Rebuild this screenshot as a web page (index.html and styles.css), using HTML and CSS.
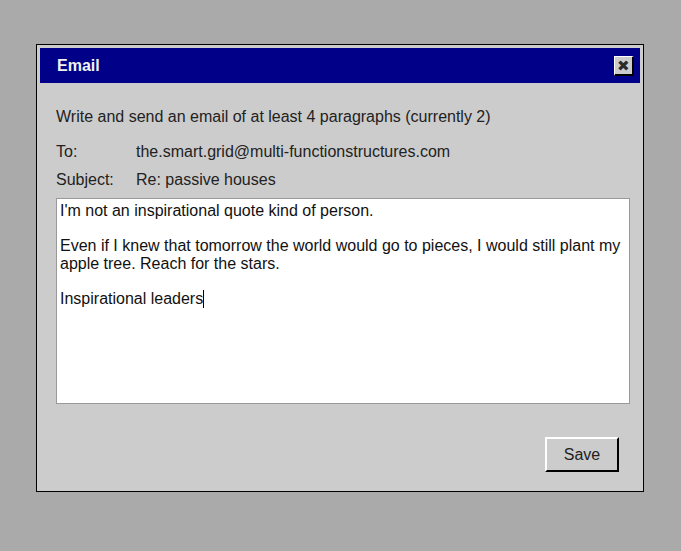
FILE: index.html
```html
<!DOCTYPE html>
<html>
<head>
<meta charset="utf-8">
<link rel="stylesheet" href="styles.css">
</head>
<body>
<div class="dialog">
  <div class="titlebar">
    <span class="title">Email</span>
    <span class="close">✖</span>
  </div>
  <div class="content">
    <p class="intro">Write and send an email of at least 4 paragraphs (currently 2)</p>
    <div class="field"><span class="label">To:</span><span class="value">the.smart.grid@multi-functionstructures.com</span></div>
    <div class="field subject"><span class="label">Subject:</span><span class="value">Re: passive houses</span></div>
    <div class="editor">I'm not an inspirational quote kind of person.<br><br>Even if I knew that tomorrow the world would go to pieces, I would still plant my<br>apple tree. Reach for the stars.<br><br>Inspirational leaders<span class="caret"></span></div>
    <div class="actions"><button class="save">Save</button></div>
  </div>
</div>
</body>
</html>
```
FILE: styles.css
```css
html, body {
  margin: 0;
  padding: 0;
  background: #aaaaaa;
  font-family: "Liberation Sans", Arial, Helvetica, sans-serif;
  color: #222;
}
body {
  padding: 44px 0 0 36px;
}
.dialog {
  width: 600px;
  height: 440px;
  border: 1px solid #000;
  padding: 3px;
  background: #cccccc;
}
.titlebar {
  height: 35px;
  background: #000088;
  display: flex;
  align-items: center;
  justify-content: space-between;
  padding: 0 6px 0 17px;
}
.title {
  color: #f2f2f2;
  font-weight: bold;
  font-size: 16px;
}
.close {
  width: 17px;
  height: 17px;
  background: #cccccc;
  border-top: 1px solid #fff;
  border-left: 1px solid #fff;
  border-bottom: 2px solid #000;
  border-right: 2px solid #000;
  color: #2a2a2a;
  font-size: 15px;
  line-height: 17px;
  text-align: center;
}
.content {
  padding: 0 0 0 16px;
}
.intro {
  margin: 0;
  padding-top: 25px;
  font-size: 16px;
  line-height: 18px;
  height: 18px;
  margin-bottom: 17px;
}
.field {
  display: flex;
  font-size: 16px;
  line-height: 18px;
  height: 18px;
  margin-bottom: 10px;
}
.field.subject {
  margin-bottom: 9px;
}
.label {
  width: 80px;
}
.editor {
  width: 566px;
  height: 197px;
  background: #fff;
  border: 1px solid #999;
  padding: 3px 3px 4px 3px;
  font-size: 16px;
  line-height: 17.5px;
  color: #111;
}
.caret {
  display: inline-block;
  width: 1px;
  height: 18px;
  background: #000;
  vertical-align: -4px;
}
.actions {
  display: flex;
  justify-content: flex-end;
  padding-right: 21px;
  margin-top: 33px;
}
.save {
  width: 74px;
  height: 35px;
  background: #cccccc;
  border-top: 2px solid #fff;
  border-left: 2px solid #fff;
  border-bottom: 2px solid #000;
  border-right: 2px solid #000;
  font-family: "Liberation Sans", Arial, sans-serif;
  font-size: 16px;
  color: #222;
  padding: 0;
}
```
